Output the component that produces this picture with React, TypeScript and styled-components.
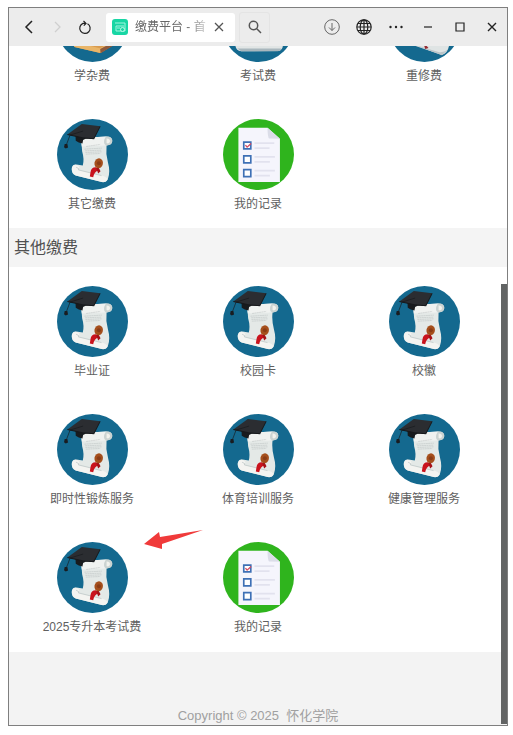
import React from "react";
import styled, { createGlobalStyle } from "styled-components";

const GlobalStyle = createGlobalStyle`
  *, *::before, *::after { box-sizing: border-box; }
  body { margin: 0; background: #fff; font-family: "Liberation Sans", "Noto Sans CJK SC", sans-serif; }
`;

const Page = styled.div`
  height: 100vh;
  padding: 7px 5px 9px 8px;
`;

const BrowserWindow = styled.div`
  height: 100%;
  display: flex;
  flex-direction: column;
  border: 1px solid #7f7f7f;
  background: #fff;
`;

const Toolbar = styled.header`
  flex: none;
  height: 38px;
  display: flex;
  align-items: center;
  justify-content: space-between;
  padding: 0 3px 0 8px;
  background: #ececec;
`;

const ToolGroup = styled.div<{ $gap: number }>`
  display: flex;
  align-items: center;
  gap: ${(p) => p.$gap}px;
`;

const IconButton = styled.button<{ $color?: string }>`
  flex: none;
  width: 24px;
  height: 24px;
  padding: 0;
  border: 0;
  background: none;
  color: ${(p) => p.$color ?? "#222"};
  display: grid;
  place-items: center;
`;

const Tab = styled.div`
  width: 129px;
  height: 29px;
  margin-left: 5px;
  padding: 0 4px 0 6px;
  display: flex;
  align-items: center;
  gap: 7px;
  border-radius: 3px;
  background: #fff;
`;

const TabTitle = styled.span`
  flex: 1;
  min-width: 0;
  margin-right: -8px;
  white-space: nowrap;
  font-size: 12px;
  line-height: 18px;
  color: #666;
  mask-image: linear-gradient(to right, #000 70%, rgba(0, 0, 0, 0.25));
`;

const SearchButton = styled(IconButton)`
  width: 31px;
  height: 31px;
  border: 1px solid #e4e4e4;
  border-radius: 3px;
`;

const Viewport = styled.main`
  flex: 1;
  min-height: 0;
  position: relative;
  overflow: hidden;
  display: flex;
  flex-direction: column;
  justify-content: flex-end;
`;

const ScrollThumb = styled.div`
  position: absolute;
  right: 0;
  top: 35%;
  bottom: 1px;
  width: 6px;
  background: #626464;
`;

const TileGrid = styled.nav`
  flex: none;
  display: grid;
  grid-template-columns: repeat(3, 1fr);
  grid-auto-rows: 128px;

  &:last-of-type {
    padding-bottom: 1px;
  }
`;

const Tile = styled.a`
  position: relative;
  display: flex;
  flex-direction: column;
  align-items: center;
  gap: 5px;
  padding-top: 19px;
  color: #606060;
  font-size: 12px;
  line-height: 18px;
  text-decoration: none;
`;

const TileArt = styled.svg`
  width: 71px;
  height: 71px;
`;

const Pointer = styled.svg`
  position: absolute;
  left: calc(50% + 51px);
  top: 6px;
  width: 61px;
  height: 22px;
  z-index: 1;
`;

const SectionTitle = styled.h2`
  flex: none;
  margin: 0;
  padding: 0 5px;
  background: #f4f4f4;
  color: #505050;
  font-size: 16px;
  font-weight: 400;
  line-height: 39px;
`;

const Footer = styled.footer`
  flex: none;
  padding: 54px 0 0;
  background: #f3f3f3;
  color: #a0a0a0;
  font-size: 13px;
  line-height: 19px;
  text-align: center;
  white-space: pre;
`;

type Art = "diploma" | "checklist" | "book" | "exam" | "retake";

const Diploma = () => (
  <>
    <path d="M93 90 Q90 77 103 77 L168 73 Q186 73 185 87 Q184 100 168 100 Q165 124 172 150 Q180 178 172 200 Q168 211 154 209 L76 190 Q62 183 64 167 Q67 155 78 157 L97 160 Q102 140 95 117Z" fill="#e4e9e7" />
    <path d="M103 77 L168 73 Q158 80 163 100 L94 103 Q89 79 103 77" fill="#f0f2f0" />
    <path d="M168 73 Q186 73 185 87 Q184 100 168 100 Q158 97 161 84 Q163 75 168 73" fill="#cbd3d1" />
    <path d="M168 79 Q180 80 178 89 Q175 96 168 93" fill="#f2f2ed" />
    <path d="M65 165 Q70 154 81 159 Q91 165 84 173 L154 190 Q168 193 171 202 Q166 212 154 209 L76 190 Q62 183 65 165" fill="#f4f4f1" />
    <path d="M77 165 Q89 169 84 173 L153 190" fill="none" stroke="#b5c0c0" strokeWidth="2" />
    <path d="M107 103 L149 97 M102 111 L154 108 M104 116 L153 114 M105 121 L154 119 M106 126 L149 124" stroke="#b4bbba" strokeWidth="1.4" strokeDasharray="6 1" />
    <path d="M137 165 Q122 164 120 180 L118 193 L128 195 Q131 178 144 175Z" fill="#c9131d" />
    <path d="M144 165 L150 177 L143 184 L137 167Z" fill="#a61118" />
    <path d="M138 141 Q150 134 156 146 Q160 157 151 166 Q140 172 134 163 Q128 149 138 141" fill="#a54f1c" />
    <circle cx="145" cy="153" r="6" fill="#8a3c16" />
    <path d="M75 66 L76 86 Q84 93 96 94 L98 84 Q108 77 128 81 L134 72Z" fill="#181b1e" />
    <path d="M51 67 L94 36 L149 43 L130 80 L96 77Z" fill="#2b2d31" />
    <path d="M51 67 L96 77 L130 80 L149 43" fill="none" stroke="#17191c" strokeWidth="3" />
    <path d="M98 57 L59 69 L48 98" fill="none" stroke="#16191c" strokeWidth="2" />
    <path d="M43 96 L51 96 L53 106 L46 109 L41 105Z" fill="#191c20" />
  </>
);

const Checklist = () => (
  <>
    <path d="M66 47 L153 47 L190 80 L190 209 L66 209Z" fill="#f5f5fc" />
    <path d="M153 47 L190 80 L158 79 Q153 77 153 47" fill="#dbdde8" />
    <path d="M114 93 H173 M114 108 H159 M114 134 H175 M114 149 H160 M114 175 H175 M114 190 H160" stroke="#e2e2ee" strokeWidth="5" />
    <path d="M82 90 H103 V110 H82Z M82 131 H103 V152 H82Z M82 172 H103 V193 H82Z" fill="#fff" stroke="#3e70b5" strokeWidth="5" />
    <path d="M87 99 L92 105 L104 94" fill="none" stroke="#d34961" strokeWidth="4" />
  </>
);

const Book = () => (
  <>
    <path d="M62 170 L124 132 L188 172 L188 182 L150 206 L72 188Z" fill="#d99b4f" />
    <path d="M66 172 L148 192 L188 170 L188 182 L149 206 L72 188Z" fill="#e9b568" />
    <path d="M149 194 L188 174 L188 184 L150 207Z" fill="#8f5a3c" />
  </>
);

const Exam = () => (
  <>
    <path d="M57 60 H195 L199 184 Q198 196 187 200 L74 201 Q59 199 57 184Z" fill="#e1e5e5" />
    <path d="M63 193 H194 Q192 201 183 201 H74Z" fill="#a9b7bd" />
  </>
);

const Retake = () => (
  <>
    <path d="M80 60 L176 82 L200 180 Q197 206 178 212 L96 184Z" fill="#dfe4e4" />
    <path d="M96 182 L168 203 Q182 206 196 196 L178 213Z" fill="#bac4c8" />
    <path d="M122 174 L128 194 L138 191Z" fill="#962b32" />
  </>
);

const drawings: Record<Art, () => React.JSX.Element> = {
  diploma: Diploma,
  checklist: Checklist,
  book: Book,
  exam: Exam,
  retake: Retake,
};

type Item = { label: string; art: Art; marked?: boolean };

const schoolFees: Item[] = [
  { label: "学杂费", art: "book" },
  { label: "考试费", art: "exam" },
  { label: "重修费", art: "retake" },
  { label: "其它缴费", art: "diploma" },
  { label: "我的记录", art: "checklist" },
];

const otherFees: Item[] = [
  { label: "毕业证", art: "diploma" },
  { label: "校园卡", art: "diploma" },
  { label: "校徽", art: "diploma" },
  { label: "即时性锻炼服务", art: "diploma" },
  { label: "体育培训服务", art: "diploma" },
  { label: "健康管理服务", art: "diploma" },
  { label: "2025专升本考试费", art: "diploma", marked: true },
  { label: "我的记录", art: "checklist" },
];

const Tiles = ({ items, name }: { items: Item[]; name: string }) => (
  <TileGrid aria-label={name}>
    {items.map(({ label, art, marked }) => {
      const Drawing = drawings[art];
      return (
        <Tile href="#" key={label}>
          <TileArt viewBox="20 21 212 212" aria-hidden="true">
            <circle cx="126" cy="127" r="106" fill={art === "checklist" ? "#2fb41d" : "#14698f"} />
            <Drawing />
          </TileArt>
          {label}
          {marked && (
            <Pointer viewBox="0 0 61 22" aria-hidden="true">
              <path d="M1 15 L16 3 L17 8 L60 1 L19 15 L19 20Z" fill="#f03a3a" />
            </Pointer>
          )}
        </Tile>
      );
    })}
  </TileGrid>
);

type GlyphProps = { d: string; size?: number; width?: number; children?: React.ReactNode };

const Glyph = ({ d, size = 16, width = 1.3, children }: GlyphProps) => (
  <svg width={size} height={size} viewBox="0 0 16 16" fill="none" stroke="currentColor" strokeWidth={width} aria-hidden="true">
    <path d={d} />
    {children}
  </svg>
);

export default function App() {
  return (
    <>
      <GlobalStyle />
      <Page>
        <BrowserWindow>
          <Toolbar>
            <ToolGroup $gap={4}>
              <IconButton aria-label="后退"><Glyph d="M11 2 L5 8 L11 14" width={1.5} /></IconButton>
              <IconButton aria-label="前进" $color="#cfcfcf"><Glyph d="M6 3 L11 8 L6 13" /></IconButton>
              <IconButton aria-label="刷新"><Glyph d="M10.5 4.7 A5.2 5.2 0 1 1 6 4.4 H9 M6.5 2 L9 4.4 L6.8 6.6" width={1.2} /></IconButton>
              <Tab>
                <svg width="16" height="16" viewBox="0 0 16 16" aria-hidden="true">
                  <rect width="16" height="16" rx="3" fill="#18d6a4" />
                  <path d="M3 4 H13 V12 H4 V7 H12 M5 9 H8" fill="none" stroke="#a2f4df" />
                  <circle cx="10.5" cy="10.5" r="2" fill="#18d6a4" stroke="#c0fae9" />
                </svg>
                <TabTitle>缴费平台 - 首</TabTitle>
                <IconButton aria-label="关闭标签页" $color="#555"><Glyph d="M4 4 L12 12 M12 4 L4 12" /></IconButton>
              </Tab>
              <SearchButton aria-label="搜索" $color="#555">
                <Glyph d="M9.8 9.8 L14 14" width={1.5}><circle cx="6.5" cy="6.5" r="4.2" /></Glyph>
              </SearchButton>
            </ToolGroup>
            <ToolGroup $gap={8}>
              <IconButton aria-label="下载" $color="#666">
                <Glyph d="M8 4 V11.5 M5 8.5 L8 11.5 L11 8.5" width={1}><circle cx="8" cy="8" r="7.3" /></Glyph>
              </IconButton>
              <IconButton aria-label="语言">
                <Glyph d="M8 1 V15 M1 8 H15 M2 4.5 H14 M2 11.5 H14" width={1.2}>
                  <circle cx="8" cy="8" r="7.2" /><ellipse cx="8" cy="8" rx="3.8" ry="7.2" />
                </Glyph>
              </IconButton>
              <IconButton aria-label="更多">
                <Glyph d="">
                  <g fill="currentColor" stroke="none"><circle cx="2.5" cy="8" r="1.2" /><circle cx="8" cy="8" r="1.2" /><circle cx="13.5" cy="8" r="1.2" /></g>
                </Glyph>
              </IconButton>
              <IconButton aria-label="最小化"><Glyph d="M4 8 H12" width={1.2} /></IconButton>
              <IconButton aria-label="最大化"><Glyph d="M4 4 H12 V12 H4Z" width={1.2} /></IconButton>
              <IconButton aria-label="关闭"><Glyph d="M4 4 L12 12 M12 4 L4 12" width={1.4} /></IconButton>
            </ToolGroup>
          </Toolbar>
          <Viewport>
            <Tiles items={schoolFees} name="缴费" />
            <SectionTitle>其他缴费</SectionTitle>
            <Tiles items={otherFees} name="其他缴费" />
            <Footer>{"Copyright © 2025  怀化学院"}</Footer>
            <ScrollThumb />
          </Viewport>
        </BrowserWindow>
      </Page>
    </>
  );
}
